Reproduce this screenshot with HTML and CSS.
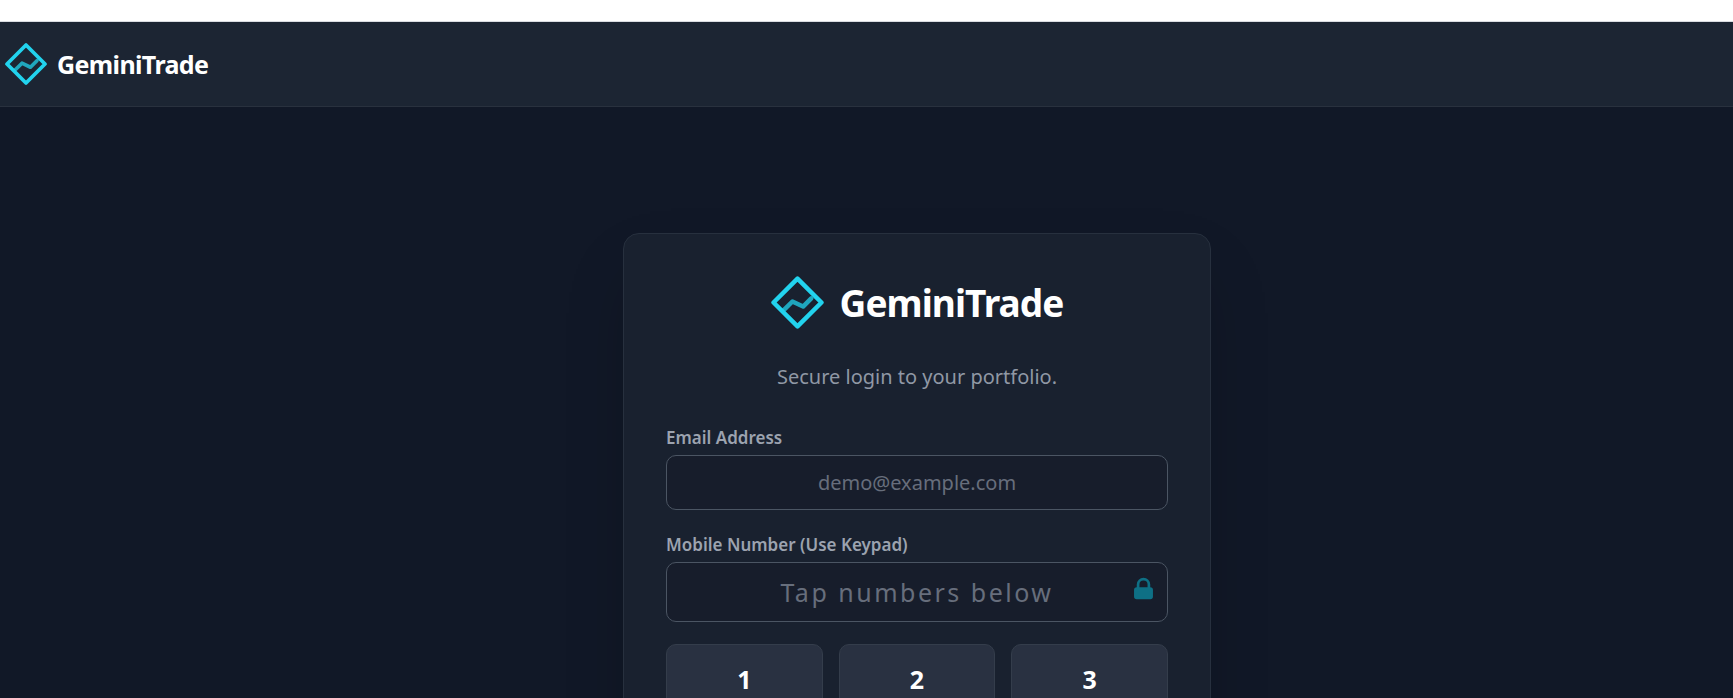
FILE: index.html
```html
<!DOCTYPE html>
<html lang="en">
<head>
<meta charset="utf-8">
<meta name="viewport" content="width=device-width, initial-scale=1">
<title>GeminiTrade</title>
<link rel="stylesheet" href="styles.css">
</head>
<body>
<header class="topbar">
  <svg class="topbar-mark" viewBox="0 0 52 52" fill="none" stroke="currentColor" stroke-width="4.600" stroke-linecap="round" stroke-linejoin="round" aria-hidden="true"><path d="M26 2.500 49.500 26 26 49.500 2.500 26Z"/><path d="M12.500 33.500 21 25 31.500 30 39.500 22" opacity=".75"/></svg>
  <span class="topbar-name">GeminiTrade</span>
</header>
<main class="stage">
  <form class="card">
    <div class="brand">
      <svg class="brand-mark" viewBox="0 0 52 52" fill="none" stroke="currentColor" stroke-width="4.400" stroke-linecap="round" stroke-linejoin="round" aria-hidden="true"><path d="M26 2.500 49.500 26 26 49.500 2.500 26Z"/><path d="M12.500 33.500 21 25 31.500 30 39.500 22" opacity=".75"/></svg>
      <h1 class="brand-name">GeminiTrade</h1>
    </div>
    <p class="tagline">Secure login to your portfolio.</p>
    <div class="field">
      <label class="label" for="email">Email Address</label>
      <input class="input" id="email" type="email" placeholder="demo@example.com">
    </div>
    <div class="field">
      <label class="label" for="mobile">Mobile Number (Use Keypad)</label>
      <div class="input-wrap">
        <input class="input input-number" id="mobile" type="tel" placeholder="Tap numbers below" readonly>
        <svg class="lock" viewBox="0 0 20 20" fill="currentColor" aria-hidden="true"><path fill-rule="evenodd" clip-rule="evenodd" d="M5 9V7a5 5 0 0110 0v2a2 2 0 012 2v5a2 2 0 01-2 2H5a2 2 0 01-2-2v-5a2 2 0 012-2zm8-2v2H7V7a3 3 0 016 0z"/></svg>
      </div>
    </div>
    <div class="keypad">
      <button class="key" type="button">1</button>
      <button class="key" type="button">2</button>
      <button class="key" type="button">3</button>
    </div>
  </form>
</main>
</body>
</html>
```
FILE: styles.css
```css
* {
  box-sizing: border-box;
}

html {
  background: #fff;
}

body {
  margin: 0;
  padding-top: 21px;
  min-height: 100vh;
  display: flex;
  flex-direction: column;
  overflow-x: hidden;
  font-family: "Noto Sans", "Open Sans", sans-serif;
  color: #fff;
}

.topbar {
  display: flex;
  align-items: center;
  gap: 10px;
  height: 86px;
  padding: 0 5px;
  border-top: 1px solid #d9dce1;
  border-bottom: 1px solid #29313e;
  background: #1c2533;
}

.topbar-mark {
  width: 42px;
  height: 42px;
  color: #22d3ee;
}

.topbar-name {
  font-size: 25px;
  font-weight: 700;
  letter-spacing: -0.025em;
}

.stage {
  flex: 1;
  display: flex;
  justify-content: center;
  align-items: flex-start;
  padding: 126px 20px 0 121px;
  background: #111827;
}

.card {
  width: 100%;
  max-width: 588px;
  padding: 42px;
  border: 1px solid #27303e;
  border-radius: 16px;
  background: #19212f;
  box-shadow: 0 32px 64px -16px rgba(0, 0, 0, 0.25);
}

.brand {
  display: flex;
  justify-content: center;
  align-items: center;
  gap: 16px;
}

.brand-mark {
  width: 53px;
  height: 53px;
  color: #22d3ee;
}

.brand-name {
  margin: 0;
  font-size: 37px;
  line-height: 52px;
  font-weight: 700;
  letter-spacing: -0.025em;
}

.tagline {
  margin: 32px 0;
  font-size: 20px;
  line-height: 32px;
  text-align: center;
  color: #9098a5;
}

.field {
  margin-bottom: 22px;
}

.label {
  display: block;
  margin-bottom: 4px;
  font-size: 17px;
  line-height: 26px;
  font-weight: 600;
  color: #9ca3af;
}

.input-wrap {
  position: relative;
}

.input {
  display: block;
  width: 100%;
  height: 55px;
  padding: 0 16px;
  border: 1px solid #4b5563;
  border-radius: 10px;
  background: #171d2b;
  font: inherit;
  font-size: 20px;
  text-align: center;
  color: #fff;
}

.input::placeholder {
  color: #676e7c;
  opacity: 1;
}

.input-number {
  height: 60px;
  font-size: 25px;
  letter-spacing: 0.1em;
}

.lock {
  position: absolute;
  top: 13px;
  right: 11px;
  width: 27px;
  height: 27px;
  color: #0e7085;
}

.keypad {
  display: grid;
  grid-template-columns: repeat(3, 1fr);
  gap: 16px;
}

.key {
  height: 70px;
  padding: 0;
  border: 1px solid #343d4b;
  border-radius: 10px;
  background: #293141;
  font: inherit;
  font-size: 25px;
  font-weight: 700;
  color: #fff;
}
```
